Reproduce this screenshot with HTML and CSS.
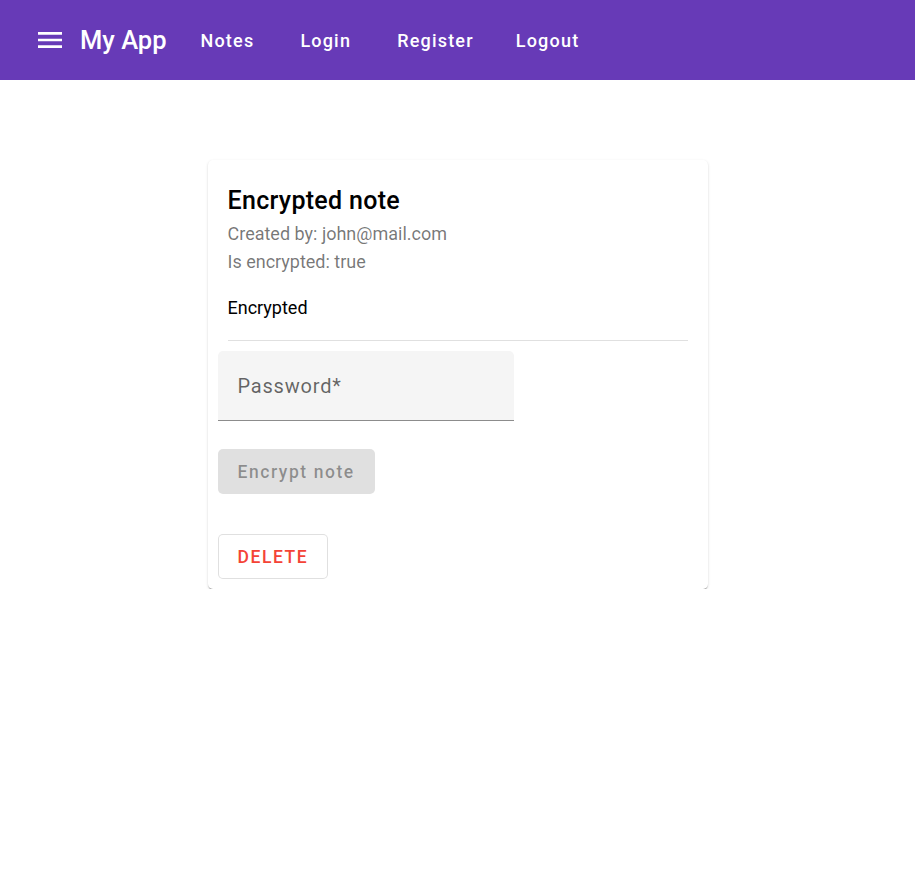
FILE: index.html
```html
<!DOCTYPE html>
<html>
<head>
<meta charset="utf-8">
<link rel="stylesheet" href="styles.css">
</head>
<body>
<header class="toolbar">
  <button class="menu-btn" aria-label="menu">
    <svg width="32" height="32" viewBox="0 0 24 24"><path d="M3 18h18v-2H3v2zm0-5h18v-2H3v2zm0-7v2h18V6H3z" fill="#fff"/></svg>
  </button>
  <span class="app-title">My App</span>
  <nav class="nav">
    <a class="nav-btn">Notes</a>
    <a class="nav-btn">Login</a>
    <a class="nav-btn">Register</a>
    <a class="nav-btn">Logout</a>
  </nav>
</header>
<main class="main">
  <div class="card">
    <div class="card-header">
      <div class="card-title">Encrypted note</div>
      <div class="card-subtitle">Created by: john@mail.com</div>
      <div class="card-subtitle">Is encrypted: true</div>
      <div class="card-content">Encrypted</div>
    </div>
    <div class="divider"></div>
    <form class="form">
      <div class="field"><span class="field-label">Password*</span></div>
      <button type="button" class="btn-flat" disabled>Encrypt note</button>
    </form>
    <div class="actions">
      <button type="button" class="btn-outline">DELETE</button>
    </div>
  </div>
</main>
</body>
</html>
```
FILE: styles.css
```css
* { box-sizing: border-box; }
body {
  margin: 0;
  font-family: Roboto, "Helvetica Neue", sans-serif;
  background: #fff;
}
.toolbar {
  height: 80px;
  background: #673ab7;
  color: #fff;
  display: flex;
  align-items: center;
  padding-left: 34px;
}
.menu-btn {
  background: none;
  border: 0;
  padding: 0;
  width: 32px;
  height: 32px;
  display: flex;
}
.app-title {
  margin-left: 14px;
  font-size: 25.5px;
  font-weight: 500;
  line-height: 32px;
}
.nav {
  display: flex;
  margin-left: 13px;
  gap: 4px;
}
.nav-btn {
  padding: 0 21px;
  font-size: 18px;
  font-weight: 500;
  letter-spacing: 1.2px;
  line-height: 45px;
  color: #fff;
}
.nav-btn:nth-child(3) {
  margin-right: -4px;
}
.main {
  padding-top: 80px;
  display: flex;
  justify-content: center;
}
.card {
  width: 500px;
  background: #fff;
  border-radius: 5px;
  box-shadow: 0 2px 1px -1px rgba(0,0,0,.2), 0 1px 1px 0 rgba(0,0,0,.14), 0 1px 3px 0 rgba(0,0,0,.12);
  padding-bottom: 10px;
}
.card-header {
  padding: 25px 20px 0;
}
.card-title {
  font-size: 25px;
  font-weight: 500;
  letter-spacing: 0.3px;
  line-height: 32px;
  color: #000;
  margin-bottom: 3px;
}
.card-subtitle {
  font-size: 18px;
  line-height: 28px;
  color: rgba(0,0,0,.54);
}
.card-content {
  font-size: 18px;
  line-height: 28px;
  color: #000;
  margin-top: 18px;
}
.divider {
  height: 1px;
  background: #e0e0e0;
  margin: 18px 20px 0;
}
.form {
  padding: 10px 10px 0;
  display: flex;
  flex-direction: column;
  align-items: flex-start;
}
.field {
  width: 296px;
  height: 70px;
  background: #f5f5f5;
  border-radius: 5px 5px 0 0;
  border-bottom: 1px solid #8c8c8c;
  display: flex;
  align-items: center;
  padding-left: 20px;
}
.field-label {
  font-size: 20px;
  letter-spacing: 0.8px;
  color: rgba(0,0,0,.6);
}
.btn-flat {
  margin-top: 28px;
  height: 45px;
  padding: 0 20px;
  border: 0;
  border-radius: 5px;
  background: #e0e0e0;
  color: rgba(0,0,0,.38);
  font-family: inherit;
  font-size: 17.5px;
  font-weight: 500;
  letter-spacing: 1.56px;
}
.actions {
  padding: 40px 10px 0;
}
.btn-outline {
  height: 45px;
  padding: 0 19px;
  border: 1px solid rgba(0,0,0,.12);
  border-radius: 5px;
  background: #fff;
  color: #f44336;
  font-family: inherit;
  font-size: 17.5px;
  font-weight: 500;
  letter-spacing: 1.56px;
}
```
